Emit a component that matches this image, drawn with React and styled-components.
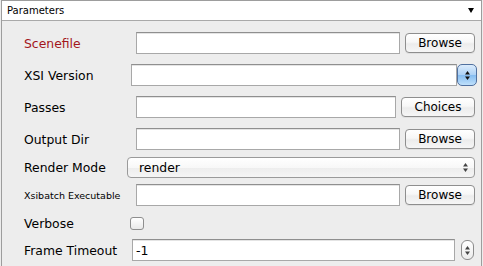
import React from "react";
import styled, { createGlobalStyle } from "styled-components";

const Global = createGlobalStyle`
  html, body { margin: 0; padding: 0; background: #ececec; }
  body { font-family: "DejaVu Sans", "Lucida Grande", sans-serif; }
  * { box-sizing: border-box; }
`;

const Panel = styled.div`
  margin: 0 1px;
  min-height: 266px;
  border: 1px solid #9d9d9d;
  border-bottom: none;
  background: #ededed;
`;

const Header = styled.div`
  height: 20px;
  background: #fff;
  border-bottom: 1px solid #a9a9a9;
  display: flex;
  align-items: center;
  justify-content: space-between;
  padding: 0 7px 0 5px;
  font-size: 10px;
  color: #000;
`;

const Body = styled.div`
  padding: 6px 6px 0 22px;
  display: flex;
  flex-direction: column;
`;

const Row = styled.div`
  height: ${(p) => p.$h}px;
  display: flex;
  align-items: center;
`;

const Label = styled.div`
  width: 103px;
  flex: none;
  font-size: ${(p) => (p.$small ? "9.5px" : "12.4px")};
  color: ${(p) => (p.$required ? "#a3161b" : "#000")};
  white-space: nowrap;
`;

const TextInput = styled.div`
  flex: 1;
  height: 22px;
  margin-left: ${(p) => p.$ml || 0}px;
  background: #fff;
  border: 1px solid #a8a8a8;
  border-top-color: #8f8f8f;
  box-shadow: inset 0 1px 0 #e4e4e4;
  font-size: 12.5px;
  display: flex;
  align-items: center;
  padding-left: 3px;
  color: #000;
`;

const PushButton = styled.div`
  flex: none;
  width: ${(p) => p.$w}px;
  height: 20px;
  margin-left: ${(p) => p.$ml}px;
  border: 1px solid #8e8e8e;
  border-radius: 4px;
  background: linear-gradient(#ffffff 0%, #f7f7f7 45%, #ececec 55%, #f6f6f6 100%);
  box-shadow: 0 1px 0 rgba(0, 0, 0, 0.06);
  font-size: 12px;
  color: #000;
  display: flex;
  align-items: center;
  justify-content: center;
`;

const BlueStepper = styled.div`
  flex: none;
  width: 20px;
  height: 22px;
  margin-right: -2px;
  border: 1px solid #50709f;
  border-radius: 5px;
  background: linear-gradient(#dcecfc 0%, #aed2f6 48%, #86bdf1 52%, #bfe0fb 100%);
  display: flex;
  align-items: center;
  justify-content: center;
`;

const GrayStepper = styled.div`
  flex: none;
  width: 13px;
  height: 20px;
  margin-left: 6px;
  margin-right: 1px;
  border: 1px solid #8c8c8c;
  border-radius: 6px;
  background: linear-gradient(#ffffff, #ececec);
  display: flex;
  align-items: center;
  justify-content: center;
`;

const Select = styled.div`
  flex: 1;
  height: 21px;
  border: 1px solid #9a9a9a;
  border-radius: 4px;
  background: linear-gradient(#ffffff 0%, #f8f8f8 50%, #ededed 51%, #f5f5f5 100%);
  display: flex;
  align-items: center;
  justify-content: space-between;
  padding: 0 6px 0 11px;
  font-size: 12.4px;
  color: #000;
`;

const Checkbox = styled.div`
  width: 14px;
  height: 13px;
  margin-left: 3px;
  border: 1px solid #8e8e8e;
  border-radius: 3px;
  background: linear-gradient(#ffffff, #e9e9e9);
`;

const Arrows = ({ color = "#000", w = 5, gap = 2 }) => (
  <svg width={w} height={9 + gap - 2} viewBox={`0 0 5 ${9 + gap - 2}`}>
    <polygon points="2.5,0 5,3.5 0,3.5" fill={color} />
    <polygon points={`0,${3.5 + gap} 5,${3.5 + gap} 2.5,${7 + gap}`} fill={color} />
  </svg>
);

const DownTriangle = () => (
  <svg width="6" height="5" viewBox="0 0 6 5">
    <polygon points="0,0 6,0 3,5" fill="#000" />
  </svg>
);

export default function App() {
  return (
    <>
      <Global />
      <Panel>
        <Header>
          <span>Parameters</span>
          <DownTriangle />
        </Header>
        <Body>
          <Row $h={32}>
            <Label $required>Scenefile</Label>
            <TextInput $ml={9} />
            <PushButton $w={70} $ml={5}>Browse</PushButton>
          </Row>
          <Row $h={32}>
            <Label>XSI Version</Label>
            <TextInput $ml={4} />
            <BlueStepper>
              <Arrows color="#111" />
            </BlueStepper>
          </Row>
          <Row $h={32}>
            <Label>Passes</Label>
            <TextInput $ml={9} />
            <PushButton $w={74} $ml={5}>Choices</PushButton>
          </Row>
          <Row $h={32}>
            <Label>Output Dir</Label>
            <TextInput $ml={9} />
            <PushButton $w={70} $ml={5}>Browse</PushButton>
          </Row>
          <Row $h={25}>
            <Label>Render Mode</Label>
            <Select>
              <span>render</span>
              <Arrows color="#444" />
            </Select>
          </Row>
          <Row $h={30}>
            <Label $small>Xsibatch Executable</Label>
            <TextInput $ml={9} />
            <PushButton $w={70} $ml={5}>Browse</PushButton>
          </Row>
          <Row $h={27}>
            <Label>Verbose</Label>
            <Checkbox />
          </Row>
          <Row $h={26}>
            <Label>Frame Timeout</Label>
            <TextInput $ml={5}>-1</TextInput>
            <GrayStepper>
              <Arrows color="#444" />
            </GrayStepper>
          </Row>
        </Body>
      </Panel>
    </>
  );
}
